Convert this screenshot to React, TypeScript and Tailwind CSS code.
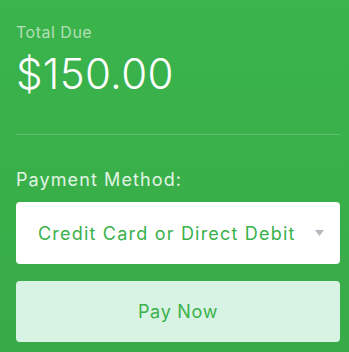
export default function App() {
  return (
    <div
      className="w-[349px] h-[352px] overflow-hidden bg-gradient-to-b from-[#3bb44c] to-[#37ab48] pl-4 pr-[9px] pt-[22px]"
      style={{ fontFamily: 'Inter, "Liberation Sans", sans-serif' }}
    >
      <div className="text-[16px] leading-5 text-white/60 tracking-[0.5px]">Total Due</div>
      <div className="mt-[8px] text-[42px] leading-[48px] font-light text-white tracking-[0.3px]">$150.00</div>
      <div className="mt-[36px] h-px bg-white/20" />
      <div className="mt-[33px] text-[18px] leading-6 text-white/85 tracking-[1.1px]">Payment Method:</div>
      <div className="mt-[10px] h-[62px] rounded bg-white flex items-center pl-[22px] pr-[16px]">
        <span className="flex-1 text-[18px] text-[#3ab14b] tracking-[1.2px]">Credit Card or Direct Debit</span>
        <svg width="9" height="6" viewBox="0 0 9 6" className="ml-2">
          <path d="M0 0h9L4.5 6z" fill="#b5b8c0" />
        </svg>
      </div>
      <button className="mt-[17px] w-full h-[61px] rounded bg-[#d8f3e3] text-[18px] text-[#3ab14b] tracking-[0.7px] flex items-center justify-center">
        Pay Now
      </button>
    </div>
  );
}
